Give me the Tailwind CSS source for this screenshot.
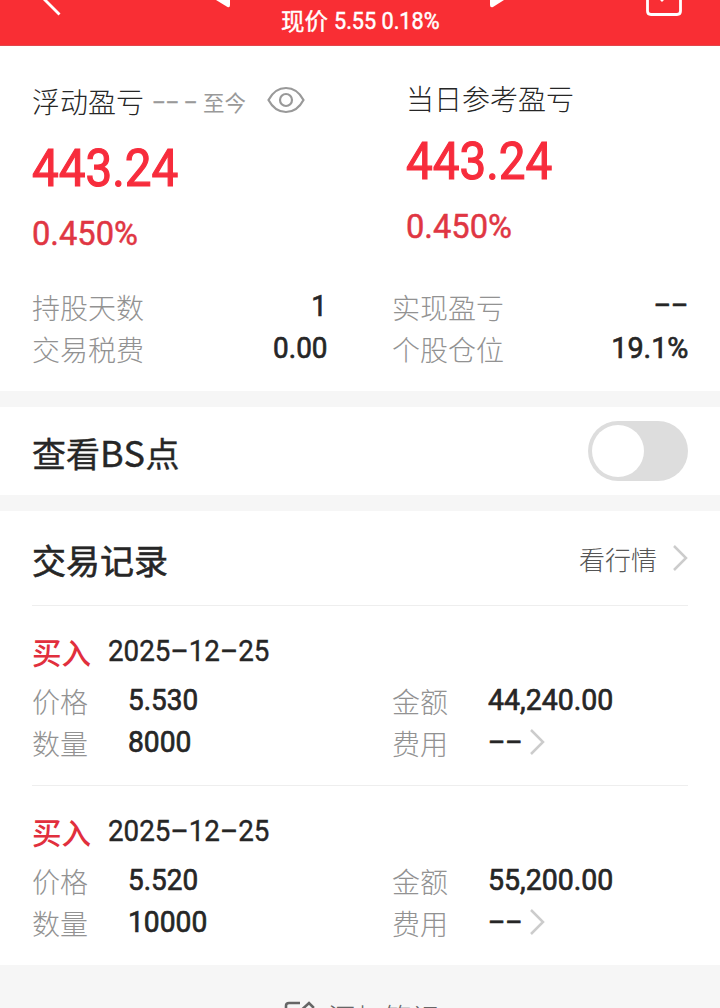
<!DOCTYPE html>
<html lang="zh-CN">
<head>
<meta charset="utf-8">
<title>持仓详情</title>
<script src="https://cdn.jsdelivr.net/npm/@tailwindcss/browser@4"></script>
</head>
<body class="w-[720px] h-[1008px] overflow-hidden bg-[#f6f6f6] font-['Noto_Sans_CJK_SC',sans-serif] text-[#262626]">
<header class="h-[46px] bg-[#f92e34] border-b border-[#e2464b] flex items-start px-8 overflow-hidden text-white">
  <svg class="w-8 h-[46px] shrink-0" viewBox="32 0 32 46" fill="none" stroke="currentColor" stroke-width="2.8"><path d="M40-5L59.500 14.500"/></svg>
  <svg class="w-4 h-[46px] shrink-0 ml-[150px]" viewBox="214 0 16 46" fill="currentColor"><path d="M214-2L216 0L227.500 7Q230 8 230 5V-2Z"/></svg>
  <div class="w-[210px] ml-[51px] h-10 flex items-center text-[23.500px] leading-10 whitespace-nowrap">
    <span class="w-[53px] [-webkit-text-stroke:0.4px_currentColor]">现价</span>
    <span class="mt-px font-['Roboto'] origin-left scale-x-[.92] [-webkit-text-stroke:0.5px_currentColor]">5.55 0.18%</span>
  </div>
  <svg class="w-4 h-[46px] shrink-0 -ml-px" viewBox="490 0 16 46" fill="currentColor"><path d="M490-2V5Q490 8 493 7L504 0V-2Z"/></svg>
  <svg class="w-10 h-[46px] shrink-0 ml-auto mr-1" viewBox="644 0 40 46" fill="none" stroke="currentColor" stroke-width="2.800"><path d="M647.500-5V11Q647.500 14.500 651 14.500H677Q680.500 14.500 680.500 11V-5M658-4L662 0L666-4"/></svg>
</header>
<main>
  <section class="h-[345px] bg-white px-8 pt-[32px]">
    <div class="flex h-[200px]">
      <div class="w-[374px] pt-[3px]">
        <div class="h-10 flex items-center">
          <span class="text-[28px] font-light leading-10">浮动盈亏</span>
          <span class="w-[51px] mt-[4px] ml-[8px] text-[#999] font-['Roboto'] text-[24px] tracking-[-0.500px] origin-left scale-x-[.88] whitespace-pre [-webkit-text-stroke:0.3px_currentColor]">–– –</span>
          <span class="w-[54px] text-[21.500px] text-[#999] leading-10 whitespace-nowrap mt-px">至今</span>
          <svg class="w-[38px] h-7 ml-[10px] -mt-[3px]" viewBox="0 0 38 28" fill="none" stroke="#999" stroke-width="2.200"><path d="M1.500 14C10-2 28-2 36.500 14C28 30 10 30 1.500 14Z"/><circle cx="19" cy="14" r="6"/></svg>
        </div>
        <div class="h-[60px] mt-[18px] leading-[60px] text-[52px] font-['Roboto'] text-[#f72c3c] origin-left scale-x-[.915] [-webkit-text-stroke:1.200px_currentColor]">443.24</div>
        <div class="h-10 mt-[14px] leading-10 text-[34px] font-['Roboto'] text-[#e03643] origin-left scale-x-[.96] [-webkit-text-stroke:0.500px_currentColor]">0.450%</div>
      </div>
      <div>
        <div class="h-10 leading-10 text-[28px] font-light">当日参考盈亏</div>
        <div class="h-[60px] mt-[14px] leading-[60px] text-[52px] font-['Roboto'] text-[#f72c3c] origin-left scale-x-[.915] [-webkit-text-stroke:1.200px_currentColor]">443.24</div>
        <div class="h-10 mt-[14px] leading-10 text-[34px] font-['Roboto'] text-[#e03643] origin-left scale-x-[.96] [-webkit-text-stroke:0.500px_currentColor]">0.450%</div>
      </div>
    </div>
    <div class="grid grid-cols-[295px_295px] gap-x-[66px] pt-[8px] text-[28px] leading-[42px]">
      <div class="flex justify-between"><span class="text-[#929292] font-light">持股天数</span><span class="-mt-px h-[42px] text-[30px] font-['Roboto'] origin-right scale-x-[.93] [-webkit-text-stroke:0.7px_currentColor]">1</span></div>
      <div class="flex justify-between"><span class="-ml-px text-[#929292] font-light">实现盈亏</span><span class="-mt-[2px] h-[42px] text-[30px] font-['Roboto'] origin-right scale-x-[.88] [-webkit-text-stroke:0.7px_currentColor]">––</span></div>
      <div class="flex justify-between"><span class="text-[#929292] font-light">交易税费</span><span class="-mt-px h-[42px] text-[30px] font-['Roboto'] origin-right scale-x-[.93] [-webkit-text-stroke:0.7px_currentColor]">0.00</span></div>
      <div class="flex justify-between"><span class="-ml-px text-[#929292] font-light">个股仓位</span><span class="-mt-px h-[42px] text-[30px] font-['Roboto'] origin-right scale-x-[.96] [-webkit-text-stroke:0.7px_currentColor]">19.1%</span></div>
    </div>
  </section>
  <section class="mt-4 h-[88px] bg-white px-8 flex items-center justify-between">
    <h2 class="text-[34px] leading-[48px] mt-[2px] [-webkit-text-stroke:0.4px_currentColor]">查看<span class="text-[36px] tracking-[0.500px]">BS</span>点</h2>
    <div class="w-[100px] h-[60px] rounded-full bg-[#ddd] p-1"><div class="size-[52px] rounded-full bg-white"></div></div>
  </section>
  <section class="mt-4 h-[454px] bg-white px-8">
    <div class="h-[95px] border-b border-[#eee] flex items-center justify-between">
      <h2 class="text-[34px] leading-[48px] mt-[3px] [-webkit-text-stroke:0.6px_currentColor]">交易记录</h2>
      <div class="flex items-center"><span class="text-[26px] leading-10 text-[#555] font-light mt-[2px]">看行情</span><svg class="ml-[15px] w-4 h-7" viewBox="0 0 16 28" fill="none" stroke="#ccc" stroke-width="2.500"><path d="M2 2L14 14L2 26"/></svg></div>
    </div>
    <article class="h-[180px] border-b border-[#eee] pt-[23px]">
      <div class="h-11 flex items-center"><span class="w-[76px] text-[29.500px] font-medium leading-[44px] text-[#e12f3d]">买入</span><span class="-mt-px text-[30px] font-['Roboto'] leading-[44px] origin-left scale-x-[.926] [-webkit-text-stroke:0.4px_currentColor]">2025–12–25</span></div>
      <div class="grid grid-cols-[96px_264px_96px_1fr] pt-[7px] text-[28px] leading-[42px]">
        <span class="text-[#929292] font-light">价格</span><span class="-mt-px text-[30px] font-['Roboto'] origin-left scale-x-[.93] [-webkit-text-stroke:0.7px_currentColor]">5.530</span>
        <span class="text-[#929292] font-light">金额</span><span class="-mt-px text-[30px] font-['Roboto'] origin-left scale-x-[.95] [-webkit-text-stroke:0.7px_currentColor]">44,240.00</span>
        <span class="text-[#929292] font-light">数量</span><span class="-mt-px text-[30px] font-['Roboto'] origin-left scale-x-[.94] [-webkit-text-stroke:0.7px_currentColor]">8000</span>
        <span class="text-[#929292] font-light">费用</span><div class="flex items-center -mt-[2px]"><span class="w-[41px] text-[30px] font-['Roboto'] origin-left scale-x-[.88] [-webkit-text-stroke:0.7px_currentColor]">––</span><svg class="w-4 h-7" viewBox="0 0 16 28" fill="none" stroke="#ccc" stroke-width="2.500"><path d="M2 2L14 14L2 26"/></svg></div>
      </div>
    </article>
    <article class="h-[179px] pt-[23px]">
      <div class="h-11 flex items-center"><span class="w-[76px] text-[29.500px] font-medium leading-[44px] text-[#e12f3d]">买入</span><span class="-mt-px text-[30px] font-['Roboto'] leading-[44px] origin-left scale-x-[.926] [-webkit-text-stroke:0.4px_currentColor]">2025–12–25</span></div>
      <div class="grid grid-cols-[96px_264px_96px_1fr] pt-[7px] text-[28px] leading-[42px]">
        <span class="text-[#929292] font-light">价格</span><span class="-mt-px text-[30px] font-['Roboto'] origin-left scale-x-[.93] [-webkit-text-stroke:0.7px_currentColor]">5.520</span>
        <span class="text-[#929292] font-light">金额</span><span class="-mt-px text-[30px] font-['Roboto'] origin-left scale-x-[.95] [-webkit-text-stroke:0.7px_currentColor]">55,200.00</span>
        <span class="text-[#929292] font-light">数量</span><span class="-mt-px text-[30px] font-['Roboto'] origin-left scale-x-[.94] [-webkit-text-stroke:0.7px_currentColor]">10000</span>
        <span class="text-[#929292] font-light">费用</span><div class="flex items-center -mt-[2px]"><span class="w-[41px] text-[30px] font-['Roboto'] origin-left scale-x-[.88] [-webkit-text-stroke:0.7px_currentColor]">––</span><svg class="w-4 h-7" viewBox="0 0 16 28" fill="none" stroke="#ccc" stroke-width="2.500"><path d="M2 2L14 14L2 26"/></svg></div>
      </div>
    </article>
  </section>
</main>
<footer class="h-[43px] overflow-hidden pl-[284px] pt-[36px] flex items-start text-[#666]">
  <svg class="w-8 h-8 shrink-0" viewBox="0 0 32 32" fill="none" stroke="currentColor" stroke-width="2.600"><path d="M16 2H5Q2 2 2 5V25Q2 28 5 28H23Q26 28 26 25V16M11 15L25 2L29 6L16 20H11Z"/></svg>
  <span class="ml-3 -mt-[5px] text-[28px] leading-[42px] font-light">添加笔记</span>
</footer>
</body>
</html>
